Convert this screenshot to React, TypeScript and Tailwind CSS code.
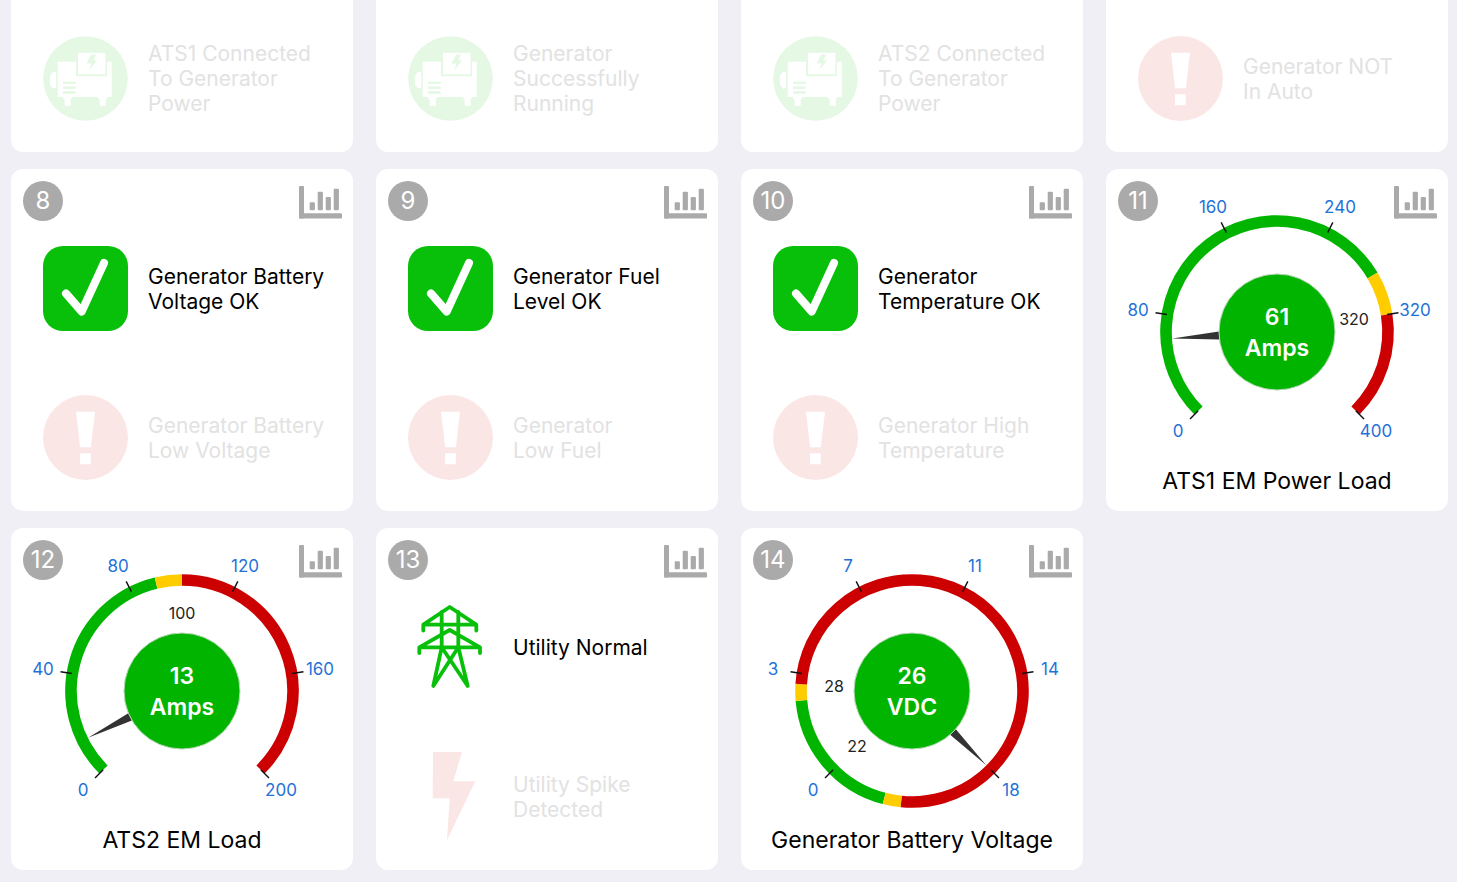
import React from 'react';

type IconName = 'generator' | 'check' | 'alert' | 'pylon' | 'bolt';

interface Status {
  icon: IconName;
  text: string;
  active?: boolean;
}

interface Segment {
  from: number;
  to: number;
  color: string;
}

interface Label {
  text: string;
  x: number;
  y: number;
}

interface GaugeData {
  title: string;
  value: string;
  unit: string;
  needle: number;
  ticks: string[];
  segments: Segment[];
  limits: Label[];
}

const GREEN = '#00b400';
const YELLOW = '#ffcc00';
const RED = '#cc0000';

const CX = 171;
const CY = 163;

// angles are in degrees, clockwise from 12 o'clock
const point = (angle: number, r: number) => {
  const rad = (angle * Math.PI) / 180;
  return [CX + r * Math.sin(rad), CY - r * Math.cos(rad)];
};

const arc = (from: number, to: number, r: number) => {
  const [x1, y1] = point(from, r);
  const [x2, y2] = point(to, r);
  return `M${x1} ${y1}A${r} ${r} 0 ${to - from > 180 ? 1 : 0} 1 ${x2} ${y2}`;
};

const tickAngles = [-135, -81, -27, 27, 81, 135];
const tickLabels = [
  { x: 72, y: 262 },
  { x: 32, y: 141 },
  { x: 107, y: 38 },
  { x: 234, y: 38 },
  { x: 309, y: 141 },
  { x: 270, y: 262 },
];

const connected: Status[] = [
  { icon: 'generator', text: 'ATS1 Connected\nTo Generator\nPower' },
  { icon: 'generator', text: 'Generator\nSuccessfully\nRunning' },
  { icon: 'generator', text: 'ATS2 Connected\nTo Generator\nPower' },
  { icon: 'alert', text: 'Generator NOT\nIn Auto' },
];

const cards: { id: number; statuses?: Status[]; gauge?: GaugeData }[] = [
  {
    id: 8,
    statuses: [
      { icon: 'check', text: 'Generator Battery\nVoltage OK', active: true },
      { icon: 'alert', text: 'Generator Battery\nLow Voltage' },
    ],
  },
  {
    id: 9,
    statuses: [
      { icon: 'check', text: 'Generator Fuel\nLevel OK', active: true },
      { icon: 'alert', text: 'Generator\nLow Fuel' },
    ],
  },
  {
    id: 10,
    statuses: [
      { icon: 'check', text: 'Generator\nTemperature OK', active: true },
      { icon: 'alert', text: 'Generator High\nTemperature' },
    ],
  },
  {
    id: 11,
    gauge: {
      title: 'ATS1 EM Power Load',
      value: '61',
      unit: 'Amps',
      needle: -93.5,
      ticks: ['0', '80', '160', '240', '320', '400'],
      segments: [
        { from: -135, to: 59.4, color: GREEN },
        { from: 59.4, to: 81, color: YELLOW },
        { from: 81, to: 135, color: RED },
      ],
      limits: [{ text: '320', x: 248, y: 150 }],
    },
  },
  {
    id: 12,
    gauge: {
      title: 'ATS2 EM Load',
      value: '13',
      unit: 'Amps',
      needle: -116.5,
      ticks: ['0', '40', '80', '120', '160', '200'],
      segments: [
        { from: -135, to: -13.5, color: GREEN },
        { from: -13.5, to: 0, color: YELLOW },
        { from: 0, to: 135, color: RED },
      ],
      limits: [{ text: '100', x: 171, y: 85 }],
    },
  },
  {
    id: 13,
    statuses: [
      { icon: 'pylon', text: 'Utility Normal', active: true },
      { icon: 'bolt', text: 'Utility Spike\nDetected' },
    ],
  },
  {
    id: 14,
    gauge: {
      title: 'Generator Battery Voltage',
      value: '26',
      unit: 'VDC',
      needle: 135,
      ticks: ['0', '3', '7', '11', '14', '18'],
      segments: [
        { from: -165.5, to: -94.9, color: GREEN },
        { from: -94.9, to: -86.4, color: YELLOW },
        { from: -86.4, to: 185.6, color: RED },
        { from: 185.6, to: 194.5, color: YELLOW },
      ],
      limits: [
        { text: '28', x: 93, y: 158 },
        { text: '22', x: 116, y: 218 },
      ],
    },
  },
];

const StatusIcon: React.FC<{ name: IconName }> = ({ name }) => (
  <svg viewBox="0 0 85 85" className="size-[85px] shrink-0 overflow-visible" aria-hidden="true">
    {name === 'check' && (
      <>
        <rect width="85" height="85" rx="20" fill="#08c00a" />
        <path d="M23 47.5L38.7 65.5L61 17" fill="none" stroke="#fff" strokeWidth="8" strokeLinecap="round" strokeLinejoin="round" />
      </>
    )}
    {name === 'alert' && (
      <>
        <circle cx="42.5" cy="42.5" r="42.5" fill="#fae7e5" />
        <path d="M33 16.7H52L47.9 52.3H37.1ZM37 58.3H47.8V69.3H37Z" fill="#fff" />
      </>
    )}
    {name === 'generator' && (
      <>
        <circle cx="42.5" cy="42.5" r="42.3" fill="#e4f8e4" />
        <g fill="#fff">
          <path d="M14.7 25.7H33V40.3H64V25.7H68.7V61H64.5L62.7 64V69.7H56.7V64L54.5 61H29.5L27.7 64V69.7H21.7V64L19.7 61H14.7Z" />
          <path d="M35 16.8H62.5V38.3H35Z" />
          <path d="M13.2 36V52.3H9.7L7 48.5V39.8L9.7 36Z" />
        </g>
        <path d="M20 45.7H32.7V48.1H20ZM20 50.5H32.7V52.9H20ZM20 55.3H32.7V57.7H20Z" fill="#e4f8e4" />
        <path d="M48.3 18.5H53L50.6 24.6H54.2L46.2 34L48.4 27.6H43.4Z" fill="#e4f8e4" />
      </>
    )}
    {name === 'pylon' && (
      <path
        d="M15.3 25.5V19.7L41.7 2L68.3 19.7V25.5M15.3 19.7H68.3M11.3 48V42.3L41.7 25L72 42.3V48M11.3 42.3H72M33.7 7V42.3M50.3 7V42.3M33.7 42.3L25.3 81L50.3 42.3M50.3 42.3L59.7 81L33.7 42.3"
        fill="none"
        stroke="#08c00a"
        strokeWidth="3.8"
        strokeLinecap="round"
        strokeLinejoin="round"
      />
    )}
    {name === 'bolt' && <path d="M25 -2H54L45.3 27.3H67.3L39 86L41.7 44.3H24.7Z" fill="#fae7e5" />}
  </svg>
);

const StatusRow: React.FC<{ status: Status }> = ({ status }) => (
  <div className="flex items-center gap-5">
    <StatusIcon name={status.icon} />
    <p className={`text-[21px] leading-[25px] whitespace-pre-line ${status.active ? 'text-black' : 'text-[#e2e2e2]'}`}>{status.text}</p>
  </div>
);

const CardHeader: React.FC<{ id: number }> = ({ id }) => (
  <div className="absolute top-3 right-[11px] left-3 flex items-start justify-between">
    <span className="flex size-10 items-center justify-center rounded-full bg-[#aaaaaa] text-2xl text-white">{id}</span>
    <button type="button" aria-label={`History ${id}`} className="pt-[5px]">
      <svg viewBox="0 0 43 33" className="h-[33px] w-[43px]" fill="#aaaaaa">
        <rect width="5" height="32.5" rx="1" />
        <rect y="27.3" width="43" height="5.2" rx="1" />
        <rect x="10.7" y="16.3" width="5.2" height="8" rx="1" />
        <rect x="18.7" y="5.7" width="5.2" height="18.6" rx="1" />
        <rect x="26.7" y="11" width="5.2" height="13.3" rx="1" />
        <rect x="34.7" y="2.7" width="5.2" height="21.6" rx="1" />
      </svg>
    </button>
  </div>
);

const Gauge: React.FC<{ gauge: GaugeData }> = ({ gauge }) => (
  <>
    <svg viewBox="0 0 342 292" className="w-full" textAnchor="middle">
      {gauge.segments.map((s) => (
        <path key={s.from} d={arc(s.from, s.to, 111)} fill="none" stroke={s.color} strokeWidth="11.6" />
      ))}
      {tickAngles.map((a, i) => {
        const [x1, y1] = point(a, 111.5);
        const [x2, y2] = point(a, 123);
        return (
          <g key={a}>
            <line x1={x1} y1={y1} x2={x2} y2={y2} stroke="#111" strokeWidth="1.4" />
            <text x={tickLabels[i].x} y={tickLabels[i].y + 6} className="fill-[#1f72d8] text-[17px]">{gauge.ticks[i]}</text>
          </g>
        );
      })}
      {gauge.limits.map((l) => (
        <text key={l.text} x={l.x} y={l.y + 6} className="fill-[#222222] text-base">{l.text}</text>
      ))}
      <path d={`M${CX - 4} ${CY - 58}L${CX} ${CY - 105}L${CX + 4} ${CY - 58}Z`} fill="#333" transform={`rotate(${gauge.needle} ${CX} ${CY})`} />
      <circle cx={CX} cy={CY} r="58" fill={GREEN} stroke="#b9d8b9" strokeWidth="1" />
      <text x={CX} y={156} className="fill-white text-[23px] font-semibold">{gauge.value}</text>
      <text x={CX} y={187} className="fill-white text-[23px] font-semibold">{gauge.unit}</text>
    </svg>
    <h2 className="text-center text-[23px] leading-10 text-black">{gauge.title}</h2>
  </>
);

const App: React.FC = () => (
  <main className="min-h-screen bg-[#efeff5] pr-[9px] pb-3 pl-[11px] font-['Inter',sans-serif]">
    <div className="grid grid-cols-4 gap-x-[23px] gap-y-[17px]">
      {connected.map((status) => (
        <section key={status.text} className="rounded-b-xl bg-white pt-9 pr-4 pb-[31px] pl-8">
          <StatusRow status={status} />
        </section>
      ))}
      {cards.map((card) => (
        <section key={card.id} className="relative aspect-square rounded-xl bg-white">
          {card.gauge && <Gauge gauge={card.gauge} />}
          {card.statuses && (
            <div className="flex flex-col gap-16 pt-[77px] pr-4 pl-8">
              {card.statuses.map((status) => (
                <StatusRow key={status.text} status={status} />
              ))}
            </div>
          )}
          <CardHeader id={card.id} />
        </section>
      ))}
    </div>
  </main>
);

export default App;
